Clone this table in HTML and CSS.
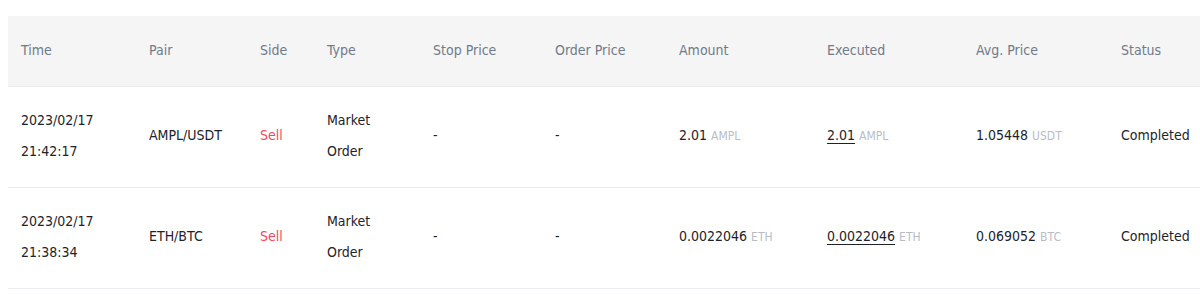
FILE: index.html
```html
<!DOCTYPE html>
<html lang="en">
  <head>
    <meta charset="UTF-8" />
    <meta name="viewport" content="width=device-width, initial-scale=1.0" />
    <title>Order History</title>
    <link rel="stylesheet" href="styles.css">
  </head>
  <body>
    <div class="container">
      <table class="orders">
        <colgroup>
          <col class="c-time">
          <col class="c-pair">
          <col class="c-side">
          <col class="c-type">
          <col class="c-stop">
          <col class="c-order">
          <col class="c-amount">
          <col class="c-exec">
          <col class="c-avg">
          <col class="c-status">
        </colgroup>
        <thead>
          <tr>
            <th>Time</th>
            <th>Pair</th>
            <th>Side</th>
            <th>Type</th>
            <th>Stop Price</th>
            <th>Order Price</th>
            <th>Amount</th>
            <th>Executed</th>
            <th>Avg. Price</th>
            <th>Status</th>
          </tr>
        </thead>
        <tbody>
          <tr>
            <td>2023/02/17<br>21:42:17</td>
            <td>AMPL/USDT</td>
            <td class="sell">Sell</td>
            <td>Market<br>Order</td>
            <td>-</td>
            <td>-</td>
            <td>2.01 <span class="unit">AMPL</span></td>
            <td><span class="link">2.01</span> <span class="unit">AMPL</span></td>
            <td>1.05448 <span class="unit">USDT</span></td>
            <td>Completed</td>
          </tr>
          <tr>
            <td>2023/02/17<br>21:38:34</td>
            <td>ETH/BTC</td>
            <td class="sell">Sell</td>
            <td>Market<br>Order</td>
            <td>-</td>
            <td>-</td>
            <td>0.0022046 <span class="unit">ETH</span></td>
            <td><span class="link">0.0022046</span> <span class="unit">ETH</span></td>
            <td>0.069052 <span class="unit">BTC</span></td>
            <td>Completed</td>
          </tr>
        </tbody>
      </table>
    </div>
  </body>
</html>
```

FILE: styles.css
```css
body {
  margin: 0;
  background-color: #fff;
  font-family: "DejaVu Sans Condensed", "DejaVu Sans", sans-serif;
  color: #1e2329;
  overflow: hidden;
}

.container {
  padding: 16px 0 0 8px;
}

.orders {
  width: 1230px;
  border-collapse: collapse;
  table-layout: fixed;
}

.c-time { width: 128px; }
.c-pair { width: 111px; }
.c-side { width: 67px; }
.c-type { width: 106px; }
.c-stop { width: 122px; }
.c-order { width: 124px; }
.c-amount { width: 148px; }
.c-exec { width: 149px; }
.c-avg { width: 145px; }

th {
  height: 67px;
  padding: 0 13px 3px;
  background-color: #f5f5f5;
  color: #707a8a;
  font-size: 14px;
  font-weight: normal;
  text-align: left;
  border-bottom: 1px solid #eaecef;
}

td {
  height: 97px;
  padding: 0 13px 3px;
  font-size: 14px;
  line-height: 31px;
  border-bottom: 1px solid #eaecef;
  white-space: nowrap;
}

.sell {
  color: #f6465d;
}

.unit {
  color: #b7bdc6;
  font-size: 12px;
}

.link {
  text-decoration: underline;
  text-underline-offset: 3px;
}
```
